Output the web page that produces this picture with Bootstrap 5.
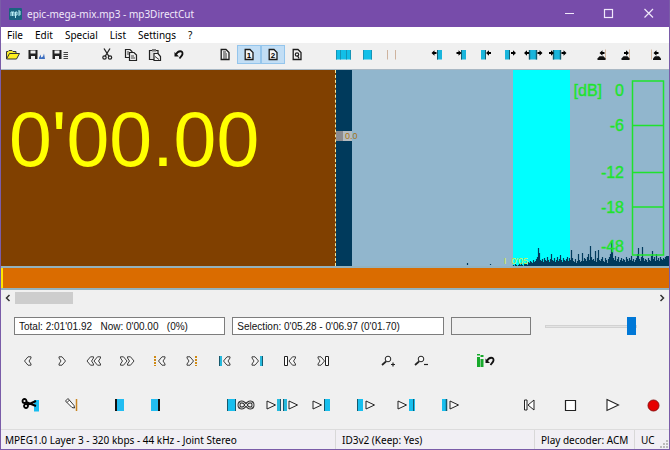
<!DOCTYPE html>
<html lang="en">
<head>
<meta charset="utf-8">
<meta name="viewport" content="width=device-width, initial-scale=1">
<title>epic-mega-mix.mp3 - mp3DirectCut</title>
<link href="https://cdn.jsdelivr.net/npm/bootstrap@5.3.0/dist/css/bootstrap.min.css" rel="stylesheet">
<style>
body { font-family: "Noto Sans", "Open Sans", sans-serif; font-size: 10px; line-height: 16px; color: #000; background: #f0f0f0; }
svg { display: block; flex: none; }
button { border: 0; background: transparent; padding: 0; color: inherit; }
.app-window { min-height: 100vh; border: 1px solid #7a5ca8; border-top: 0; }
.title-bar { height: 27px; background: #774caa; color: #f1e9fa; padding-left: 8px; gap: 5px; }
.title-bar h1 { font-size: 10px; line-height: 16px; font-weight: 400; }
.caption-btn { width: 40px; height: 27px; }
.menu-bar { height: 16px; background: #fff; padding-left: 6px; gap: 12px; }
.tool-bar { height: 26px; padding-top: 2px; gap: 22px; overflow: hidden; }
.tool-btn { width: 24px; height: 19px; }
.tool-btn.pressed { background: #c2def5; box-shadow: inset 0 0 0 1px #94c5ec; }
.wave-view { flex-grow: 1; min-height: 197px; background: #91b6cd; border-top: 1px solid #a9b8c4; }
.clock-pane { width: 50%; background: #804000; border-right: 1px dashed #f5e79a; box-sizing: content-box; }
.clock { font: 77px/80px "Liberation Sans", Arial, sans-serif; color: #ff0; padding: 29px 0 0 8px; }
.cue-strip { width: 16px; background: #003a5c; }
.cue-tag { top: 61px; left: 0; height: 10px; padding-left: 9px; white-space: nowrap; font: 9px/10px "Liberation Sans", sans-serif; color: #a87418; background: linear-gradient(90deg, #8b8b8f 7px, #b6bcc0 7px 16px, transparent 16px); z-index: 1; }
.wave-plot { min-width: 0; }
.overview { height: 24px; background: #da6c00; border: solid #93b2be; border-width: 2px 0; }
.overview-pos { width: 2px; background: #ffe600; }
.scroll-row { height: 16px; }
.scroll-row button { width: 14px; height: 16px; display: flex; align-items: center; justify-content: center; }
.scroll-thumb { width: 9%; height: 12px; background: #cdcdcd; }
.info-row { display: grid; grid-template-columns: 211fr 211fr 80fr 99fr; padding: 11px 32px 11px 13px; gap: 7px; }
.info-box { height: 18px; min-width: 0; border: 1px solid #7d7d7d; background: #fff; padding: 0 4px; font: 10px/16px "Liberation Sans", Arial, sans-serif; color: #111; }
.info-box.blank { background: #f0f0f0; }
.volume { appearance: none; min-width: 0; height: 18px; margin-left: 7px; background: transparent; }
.volume::-webkit-slider-runnable-track { height: 3px; background: #e4e4e4; border: 1px solid #d2d2d2; }
.volume::-webkit-slider-thumb { appearance: none; width: 9px; height: 18px; margin-top: -9px; background: #0078d7; }
.nav-keys { display: grid; grid-template-columns: repeat(20, 1fr); padding-left: 11px; }
.nav-keys button, .edit-keys button { height: 30px; display: flex; justify-content: center; }
.edit-keys { padding: 14px 0 9px 9px; }
.w-40 { width: 40px; } .w-36 { width: 36px; } .w-42 { width: 42px; } .w-30 { width: 30px; }
.mark-keys { margin-left: 12px; }
.play-keys { margin-left: 44px; }
.main-keys { gap: 11px; padding-right: 2px; }
.status-bar { height: 20px; border-top: 1px solid #dcdcdc; background: #f1eff4; line-height: 20px; white-space: nowrap; }
.status-bar > div { padding-left: 6px; border-left: 1px solid #d8d8d8; }
.status-bar > div:first-child { border: 0; padding-left: 4px; flex: 0 0 50%; }
.s-tag { flex: 1 1 0; } .s-dec { width: 100px; } .s-uc { width: 35px; }
.ico { font-family: "Liberation Sans", sans-serif; }
</style>
</head>
<body>
<svg width="0" height="0" class="position-absolute" aria-hidden="true">
  <defs>
    <path id="chevL" d="M-3.500 0L0 -4.200H3V-3L1 0L3 3V4.200H0Z" fill="#f5f5f5" stroke="#2b2b2b" stroke-width=".9"/>
    <path id="chevR" d="M3.500 0L0 -4.200H-3V-3L-1 0L-3 3V4.200H0Z" fill="#f5f5f5" stroke="#2b2b2b" stroke-width=".9"/>
    <path id="tri" d="M-4 -4L4.500 0L-4 4Z" fill="#f8f8f8" stroke="#222"/>
    <g id="undoArrow"><path d="M-4.500 -2.500V2H0Z" fill="#111"/><path d="M-3 0C-1 -4.500 4 -4 3.500 -.5C3.300 1 2 2 .5 4" fill="none" stroke="#111" stroke-width="1.800"/></g>
    <path id="page" d="M-3.800 -5H1L4 -2V5H-3.800Z" fill="#f4f4f4" stroke="#1c1c1c" stroke-width="1.300"/>
    <path id="arrL" d="M-3 0L0 -2.700V-1H2V1H0V2.700Z" fill="#000"/>
    <path id="arrR" d="M3 0L0 -2.700V-1H-2V1H0V2.700Z" fill="#000"/>
    <g id="floppy"><path d="M-4.500 -4.500H4.500V4.500H-4.500Z" fill="#222"/><path d="M-2.500 -4H2.500V-1H-2.500ZM-2 1.500H2V4.500H-2Z" fill="#f0f0f0"/></g>
    <path id="hill" d="M-4 5.500V4L-2 1.800H2L4 4V5.500Z" fill="#111"/>
  </defs>
</svg>

<div class="app-window d-flex flex-column">
  <header class="title-bar d-flex align-items-center">
    <svg width="13" height="12" viewBox="0 0 13 12" aria-hidden="true"><rect width="13" height="12" rx="1" fill="#1a637f"/><path d="M2 8V4H3.500V8M3.500 4H5V8M6.500 10V4H8V7H6.500M9 3H11V7H9M9 5H11" fill="none" stroke="#b9edf5"/></svg>
    <h1 class="mb-0 me-auto">epic-mega-mix.mp3 - mp3DirectCut</h1>
    <div class="d-flex">
      <button class="caption-btn" aria-label="Minimize"><svg width="40" height="27"><path d="M16 13.500H25" stroke="#f0e8fa"/></svg></button>
      <button class="caption-btn" aria-label="Maximize"><svg width="40" height="27"><rect x="15.500" y="9.500" width="8" height="8" fill="none" stroke="#f0e8fa" stroke-width="1.200"/></svg></button>
      <button class="caption-btn" aria-label="Close"><svg width="40" height="27"><path d="M15.500 9L24 17.500M24 9L15.500 17.500" stroke="#f0e8fa" stroke-width="1.200"/></svg></button>
    </div>
  </header>

  <nav class="menu-bar d-flex align-items-center" aria-label="Main menu">
    <button>File</button><button>Edit</button><button>Special</button><button>List</button><button>Settings</button><button>?</button>
  </nav>

  <div class="tool-bar d-flex align-items-start" role="toolbar" aria-label="Tools">
    <div class="d-flex">
      <button class="tool-btn" aria-label="Open"><svg width="24" height="19" viewBox="-12 -9.500 24 19"><path d="M-6.500 4.500V-3H-5L-4 -4H-1L0 -3H3V-1" fill="#f5e92a" stroke="#333"/><path d="M-6.500 4.500L-3.500 -1H6.500L3.500 4.500Z" fill="#ffee20" stroke="#333"/></svg></button>
      <button class="tool-btn" aria-label="Save audio"><svg width="24" height="19" viewBox="-12 -9.500 24 19"><use href="#floppy" x="-4"/><path d="M2 4.500V3L4 0V3L6 2L7 -1L8 4.500Z" fill="#3d6fc0"/></svg></button>
      <button class="tool-btn" aria-label="Save list"><svg width="24" height="19" viewBox="-12 -9.500 24 19"><use href="#floppy" x="-4"/><path d="M2.500 -2H7M2.500 0H7M2.500 2H7M2.500 4H7" stroke="#444"/></svg></button>
    </div>
    <div class="d-flex">
      <button class="tool-btn" aria-label="Cut"><svg width="24" height="19" viewBox="-12 -9.500 24 19"><path d="M-3 -6L2 2M3 -6L-2 2" stroke="#222" stroke-width="1.300"/><circle cx="-2.500" cy="3" r="1.700" fill="none" stroke="#222" stroke-width="1.200"/><circle cx="3" cy="3" r="1.700" fill="none" stroke="#222" stroke-width="1.200"/></svg></button>
      <button class="tool-btn" aria-label="Copy"><svg width="24" height="19" viewBox="-12 -9.500 24 19"><g fill="#eee" stroke="#222" stroke-width="1.200"><path d="M-5.500 -5H-1L1 -3V3H-5.500Z"/><path d="M-1.500 -2H3L5.500 .5V6H-1.500Z"/></g><path d="M-4 -2.500H-2M-4 -.5H-2M0 1.500H3M0 3.500H4" stroke="#444"/></svg></button>
      <button class="tool-btn" aria-label="Paste"><svg width="24" height="19" viewBox="-12 -9.500 24 19"><path d="M-5.500 -4H3V5H-5.500Z" fill="#ddd" stroke="#222" stroke-width="1.200"/><path d="M-3 -5.500H1V-3H-3Z" fill="#777"/><path d="M-1 -1H3L5.500 2V6H-1Z" fill="#f5f5f5" stroke="#222" stroke-width="1.200"/><path d="M0 2L4 5" stroke="#333"/></svg></button>
      <button class="tool-btn" aria-label="Undo"><svg width="24" height="19" viewBox="-12 -9.500 24 19"><use href="#undoArrow"/></svg></button>
    </div>
    <div class="d-flex">
      <button class="tool-btn" aria-label="Notes"><svg width="24" height="19" viewBox="-12 -9.500 24 19"><use href="#page"/><path d="M-2 -2.500H1M-2 -.5H2M-2 1.500H2M-2 3.500H2" stroke="#333"/></svg></button>
      <button class="tool-btn pressed" aria-label="Set 1"><svg class="ico" width="24" height="19" viewBox="-12 -9.500 24 19"><use href="#page"/><text x="0" y="3.500" text-anchor="middle" font-size="8" font-weight="700">1</text></svg></button>
      <button class="tool-btn pressed" aria-label="Set 2"><svg class="ico" width="24" height="19" viewBox="-12 -9.500 24 19"><use href="#page"/><text x="0" y="3.500" text-anchor="middle" font-size="8" font-weight="700">2</text></svg></button>
      <button class="tool-btn" aria-label="Set Q"><svg class="ico" width="24" height="19" viewBox="-12 -9.500 24 19"><use href="#page"/><circle cy="0" r="1.700" fill="none" stroke="#222" stroke-width="1.200"/><path d="M.5 1L2 4" stroke="#222" stroke-width="1.200"/></svg></button>
    </div>
    <div class="d-flex">
      <button class="tool-btn" aria-label="Select all"><svg width="24" height="19" viewBox="-12 -9.500 24 19"><path d="M-7 -4.500H8V5H-7Z" fill="#12bfe8"/><path d="M-6.500 -4.500V5M7.500 -4.500V5M-2.500 -4.500V5M3.500 -4.500V5" stroke="#1694b6"/></svg></button>
      <button class="tool-btn" aria-label="Select part"><svg width="24" height="19" viewBox="-12 -9.500 24 19"><path d="M-4 -4.500H5V5H-4Z" fill="#12bfe8"/><path d="M-3.500 -4.500V5M4.500 -4.500V5" stroke="#1694b6"/></svg></button>
      <button class="tool-btn" aria-label="Clear selection"><svg width="24" height="19" viewBox="-12 -9.500 24 19"><path d="M-3.500 -4.500V5M4.500 -4.500V5" stroke="#ceb39e"/></svg></button>
    </div>
    <div class="d-flex">
      <button class="tool-btn" aria-label="Begin left"><svg width="24" height="19" viewBox="-12 -9.500 24 19"><path d="M0 -4.500H5V5H0Z" fill="#19b5dc"/><path d="M.5 -4.500V5" stroke="#125e73"/><use href="#arrL" x="-2.500" y="-1.500"/></svg></button>
      <button class="tool-btn" aria-label="Begin right"><svg width="24" height="19" viewBox="-12 -9.500 24 19"><path d="M0 -4.500H5V5H0Z" fill="#19b5dc"/><path d="M.5 -4.500V5" stroke="#125e73"/><use href="#arrR" x="-2.500" y="-1.500"/></svg></button>
      <button class="tool-btn" aria-label="End left"><svg width="24" height="19" viewBox="-12 -9.500 24 19"><path d="M0 -4.500H-4V5H0Z" fill="#19b5dc"/><path d="M.5 -4.500V5" stroke="#125e73"/><use href="#arrL" x="4" y="-1.500"/></svg></button>
      <button class="tool-btn" aria-label="End right"><svg width="24" height="19" viewBox="-12 -9.500 24 19"><path d="M0 -4.500H-4V5H0Z" fill="#19b5dc"/><path d="M.5 -4.500V5" stroke="#125e73"/><use href="#arrR" x="4" y="-1.500"/></svg></button>
      <button class="tool-btn" aria-label="Shift left"><svg width="24" height="19" viewBox="-12 -9.500 24 19"><path d="M-4 -4.500H4V5H-4Z" fill="#19b5dc"/><path d="M-3.500 -4.500V5M3.500 -4.500V5" stroke="#125e73" stroke-width="1.400"/><use href="#arrL" x="-6" y="-1.500"/><use href="#arrR" x="6.500" y="-1.500"/></svg></button>
      <button class="tool-btn" aria-label="Shift right"><svg width="24" height="19" viewBox="-12 -9.500 24 19"><path d="M-4 -4.500H4V5H-4Z" fill="#19b5dc"/><path d="M-3.500 -4.500V5M3.500 -4.500V5" stroke="#125e73" stroke-width="1.400"/><use href="#arrR" x="-6" y="-1.500"/><use href="#arrR" x="6.500" y="-1.500"/></svg></button>
    </div>
    <div class="d-flex">
      <button class="tool-btn" aria-label="Cue left"><svg width="24" height="19" viewBox="-12 -9.500 24 19"><path d="M2.500 -5V5" stroke="#d5b9a2"/><use href="#hill" x="-1.500"/><use href="#arrL" x="-.5" y="-1.500"/></svg></button>
      <button class="tool-btn" aria-label="Cue right"><svg width="24" height="19" viewBox="-12 -9.500 24 19"><path d="M2.500 -5V5" stroke="#d5b9a2"/><use href="#hill" x="-1.500"/><use href="#arrR" x="-1" y="-1.500"/></svg></button>
      <button class="tool-btn ms-1" aria-label="Cue end"><svg width="24" height="19" viewBox="-12 -9.500 24 19"><path d="M-3.500 -5V5" stroke="#d5b9a2"/><use href="#hill" x="2"/><use href="#arrL" x="1.500" y="-1.500"/></svg></button>
    </div>
  </div>

  <main class="wave-view d-flex">
    <div class="clock-pane flex-shrink-0"><div class="clock">0'00.00</div></div>
    <div class="cue-strip position-relative flex-shrink-0"><span class="cue-tag position-absolute">0.0</span></div>
    <svg class="wave-plot flex-fill align-self-stretch" width="100" height="196" viewBox="1 0 316 196" preserveAspectRatio="xMaxYMax meet" font-family="Liberation Sans, Arial, sans-serif" role="img" aria-label="Waveform and level meter">
      <rect x="161" width="57" height="196" fill="#00ffff"/>
      <path id="wave" stroke="#003a5c" stroke-width="1.200" fill="none"/>
      <text x="152" y="194" font-size="9" fill="#d8ee45">I&#160; 0'05</text>
      <g fill="none" stroke="#1fe32d" stroke-width="1.500"><rect x="280.500" y="11" width="31" height="174"/><path d="M280.500 55.500H311.500M280.500 102.500H311.500M280.500 137H311.500"/></g>
      <g fill="#1fe32d" stroke="#1fe32d" stroke-width=".4" font-size="16" text-anchor="end">
        <text x="250" y="26">[dB]</text><text x="272" y="26">0</text><text x="272" y="61">-6</text><text x="272" y="108">-12</text><text x="272" y="143">-18</text><text x="272" y="182">-48</text>
      </g>
    </svg>
  </main>

  <div class="overview d-flex flex-shrink-0"><div class="overview-pos"></div></div>

  <div class="scroll-row d-flex align-items-center flex-shrink-0">
    <button aria-label="Scroll left"><svg width="6" height="8" viewBox="0 0 6 8"><path d="M4.500 1L1.500 4L4.500 7" fill="none" stroke="#333" stroke-width="1.500"/></svg></button>
    <div class="flex-fill"><div class="scroll-thumb"></div></div>
    <button aria-label="Scroll right"><svg width="6" height="8" viewBox="0 0 6 8"><path d="M1.500 1L4.500 4L1.500 7" fill="none" stroke="#333" stroke-width="1.500"/></svg></button>
  </div>

  <div class="info-row">
    <input class="info-box" readonly aria-label="Time" value="Total: 2:01'01.92 &#160; Now: 0'00.00 &#160; (0%)">
    <input class="info-box" readonly aria-label="Selection" value="Selection: 0'05.28 - 0'06.97 (0'01.70)">
    <input class="info-box blank" readonly aria-label="Message">
    <input class="volume" type="range" min="0" max="100" value="100" aria-label="Volume">
  </div>

  <div class="nav-keys">
    <button aria-label="Step back"><svg width="30" height="30" viewBox="-15 -15 30 30"><use href="#chevL"/></svg></button>
    <button aria-label="Step forward"><svg width="30" height="30" viewBox="-15 -15 30 30"><use href="#chevR" x="1"/></svg></button>
    <button aria-label="Page back"><svg width="30" height="30" viewBox="-15 -15 30 30"><use href="#chevL" x="-3.500"/><use href="#chevL" x="3.500"/></svg></button>
    <button aria-label="Page forward"><svg width="30" height="30" viewBox="-15 -15 30 30"><use href="#chevR" x="-3.500"/><use href="#chevR" x="3.500"/></svg></button>
    <button aria-label="Previous cue"><svg width="30" height="30" viewBox="-15 -15 30 30"><path d="M-5 -5V5" stroke="#cf8a14" stroke-width="2" stroke-dasharray="2 1"/><use href="#chevL" x="2"/></svg></button>
    <button aria-label="Next cue"><svg width="30" height="30" viewBox="-15 -15 30 30"><path d="M3 -5V5" stroke="#cf8a14" stroke-width="2" stroke-dasharray="2 1"/><use href="#chevR" x="-3"/></svg></button>
    <button aria-label="Selection begin"><svg width="30" height="30" viewBox="-15 -15 30 30"><path d="M-7 -5H-4V5H-7Z" fill="#27b9dc"/><path d="M-6.500 -5V5" stroke="#17596d"/><use href="#chevL" x="1"/></svg></button>
    <button aria-label="Selection end"><svg width="30" height="30" viewBox="-15 -15 30 30"><path d="M2 -5H5V5H2Z" fill="#27b9dc"/><path d="M4.500 -5V5" stroke="#17596d"/><use href="#chevR" x="-3"/></svg></button>
    <button aria-label="Previous edit"><svg width="30" height="30" viewBox="-15 -15 30 30"><path d="M-6.500 -4.500H-3.500V4.500H-6.500Z" fill="#fff" stroke="#222"/><use href="#chevL" x="1.500"/></svg></button>
    <button aria-label="Next edit"><svg width="30" height="30" viewBox="-15 -15 30 30"><path d="M1.500 -4.500H4.500V4.500H1.500Z" fill="#fff" stroke="#222"/><use href="#chevR" x="-3"/></svg></button>
    <span></span>
    <button aria-label="Zoom in"><svg width="30" height="30" viewBox="-15 -15 30 30"><circle cx="-2" cy="-2" r="2.800" fill="#f8f8f8" stroke="#222"/><path d="M-4 .5L-8 4" stroke="#222" stroke-width="1.700"/><path d="M1 3.500H5M3 1.500V5.500" stroke="#222" stroke-width="1.200"/></svg></button>
    <button aria-label="Zoom out"><svg width="30" height="30" viewBox="-15 -15 30 30"><circle cx="-2" cy="-2" r="2.800" fill="#f8f8f8" stroke="#222"/><path d="M-4 .5L-8 4" stroke="#222" stroke-width="1.700"/><path d="M1 3.500H5" stroke="#222" stroke-width="1.200"/></svg></button>
    <span></span>
    <button aria-label="Undo gain"><svg width="30" height="30" viewBox="-15 -15 30 30"><path d="M-11 -4H-8V6H-11ZM-11 -7H-8V-5.500H-11ZM-7.500 -2H-4.500V6H-7.500ZM-7.500 -6H-4.500V-4H-7.500Z" fill="#17a92b"/><use href="#undoArrow" x="2"/></svg></button>
  </div>

  <div class="edit-keys d-flex">
    <div class="d-flex">
      <button class="w-40" aria-label="Cut selection"><svg width="40" height="30" viewBox="-20 -15 40 30"><path d="M4 -5H9V6.500H4Z" fill="#16bdf0"/><circle cx="-5.500" cy="-4" r="2" fill="none" stroke="#000" stroke-width="1.800"/><circle cx="-4" cy="1" r="2" fill="none" stroke="#000" stroke-width="1.800"/><path d="M-4 -3L6 1M-3 0L6 -4" stroke="#000" stroke-width="2"/></svg></button>
      <button class="w-40" aria-label="Edit cue"><svg width="40" height="30" viewBox="-20 -15 40 30"><path d="M6.500 -6V6" stroke="#c98420" stroke-width="1.500"/><path d="M-4.500 -4L-2 -6.500L4 .5L4.500 3L2 2.500Z M-3 -2.500L-.5 -5" fill="#fff" stroke="#333"/></svg></button>
    </div>
    <div class="mark-keys d-flex">
      <button class="w-36" aria-label="Set begin"><svg width="36" height="30" viewBox="-18 -15 36 30"><path d="M-5 -6H4V6H-5Z" fill="#22bdf2"/><path d="M-4 -6V6" stroke="#111" stroke-width="2"/></svg></button>
      <button class="w-36" aria-label="Set end"><svg width="36" height="30" viewBox="-18 -15 36 30"><path d="M-5 -6H4V6H-5Z" fill="#22bdf2"/><path d="M3 -6V6" stroke="#111" stroke-width="2"/></svg></button>
    </div>
    <div class="play-keys d-flex">
      <button class="w-42" aria-label="Loop selection"><svg width="42" height="30" viewBox="-21 -15 42 30"><path d="M-12 -6H-3V6H-12Z" fill="#18bfee"/><path d="M-11.500 -6V6M-3.500 -6V6" stroke="#17596d"/><path d="M7 0C4 -4.500 0 -3.500 0 0S4 4.500 7 0S14 -3.500 14 0S10 4.500 7 0Z" fill="none" stroke="#333" stroke-width="3"/><path d="M7 0C4 -4.500 0 -3.500 0 0S4 4.500 7 0S14 -3.500 14 0S10 4.500 7 0Z" fill="none" stroke="#eee"/></svg></button>
      <button class="w-42" aria-label="Play over cut"><svg width="42" height="30" viewBox="-21 -15 42 30"><use href="#tri" x="-10"/><path d="M-4 -6H0V6H-4ZM2 -6H6V6H2Z" fill="#27b9dc"/><path d="M-.5 -6V6M2.500 -6V6" stroke="#17596d"/><use href="#tri" x="12"/></svg></button>
      <button class="w-42" aria-label="Play to begin"><svg width="42" height="30" viewBox="-21 -15 42 30"><use href="#tri" x="-6"/><path d="M1 -6H7V6H1Z" fill="#18bfee"/><path d="M1.500 -6V6" stroke="#17596d"/></svg></button>
      <button class="w-42" aria-label="Play from begin"><svg width="42" height="30" viewBox="-21 -15 42 30"><path d="M-8 -6H-2V6H-8Z" fill="#18bfee"/><path d="M-7.500 -6V6" stroke="#17596d"/><use href="#tri" x="5"/></svg></button>
      <button class="w-42" aria-label="Play to end"><svg width="42" height="30" viewBox="-21 -15 42 30"><use href="#tri" x="-5"/><path d="M2 -6H8V6H2Z" fill="#18bfee"/><path d="M6.500 -6V6" stroke="#17596d"/></svg></button>
      <button class="w-42" aria-label="Play from end"><svg width="42" height="30" viewBox="-21 -15 42 30"><path d="M-7 -6H-2V6H-7Z" fill="#18bfee"/><path d="M-2.500 -6V6" stroke="#17596d" stroke-width="1.500"/><use href="#tri" x="5"/></svg></button>
    </div>
    <div class="main-keys d-flex ms-auto">
      <button class="w-30" aria-label="Go to start"><svg width="30" height="30" viewBox="-15 -15 30 30"><path d="M-4.500 -5H-2V5H-4.500ZM5 -5V5L-1 0Z" fill="#fff" stroke="#222"/></svg></button>
      <button class="w-30" aria-label="Stop"><svg width="30" height="30" viewBox="-15 -15 30 30"><path d="M-4.500 -4.500H5.500V5.500H-4.500Z" fill="#fff" stroke="#222" stroke-width="1.200"/></svg></button>
      <button class="w-30" aria-label="Play"><svg width="30" height="30" viewBox="-15 -15 30 30"><path d="M-4 -5.500L7.500 0L-4 5.500Z" fill="#fff" stroke="#222" stroke-width="1.100"/></svg></button>
      <button class="w-30" aria-label="Record"><svg width="30" height="30" viewBox="-15 -15 30 30"><circle cx="1.500" cy=".5" r="5.500" fill="#e60000" stroke="#8c1010"/></svg></button>
    </div>
  </div>

  <footer class="status-bar d-flex flex-shrink-0">
    <div>MPEG1.0 Layer 3 - 320 kbps - 44 kHz - Joint Stereo</div>
    <div class="s-tag">ID3v2 (Keep: Yes)</div>
    <div class="s-dec">Play decoder: ACM</div>
    <div class="s-uc d-flex justify-content-between"><span>UC</span><svg class="align-self-end" width="9" height="9" viewBox="0 0 9 9" fill="#bbb" aria-hidden="true"><path d="M6 0H8V2H6ZM3 3H5V5H3ZM6 3H8V5H6ZM0 6H2V8H0ZM3 6H5V8H3ZM6 6H8V8H6Z"/></svg></div>
  </footer>
</div>

<script>
// Column heights of the visible waveform, one per pixel from x = 161
const levels = [1,0,2,1,0,1,2,1,3,1,0,2,3,2,1,4,3,5,4,3,6,4,5,7,9,18,13,6,5,7,4,8,6,5,9,6,4,7,12,6,5,8,4,6,9,5,7,11,6,4,8,6,5,7,9,5,8,6,16,8,5,4,7,3,5,12,6,4,5,13,5,8,7,5,9,12,6,20,9,6,7,5,15,4,8,16,6,5,7,9,5,4,8,6,3,7,9,12,25,14,8,6,10,5,7,9,4,6,8,5,7,6,4,9,7,5,8,6,10,5,7,4,6,8,12,18,7,5,9,19,8,5,7,6,4,8,6,5,10,15,7,9,5,12,6,8,5,9,7,6,8,7,9,10,10,10];
let d = "M115.5 195v-2M138.5 195v-1";
levels.forEach((h, i) => { if (h) d += `M${161.5 + i} 196v-${h}`; });
document.getElementById("wave").setAttribute("d", d);
</script>
<script src="https://cdn.jsdelivr.net/npm/bootstrap@5.3.0/dist/js/bootstrap.bundle.min.js"></script>
</body>
</html>
